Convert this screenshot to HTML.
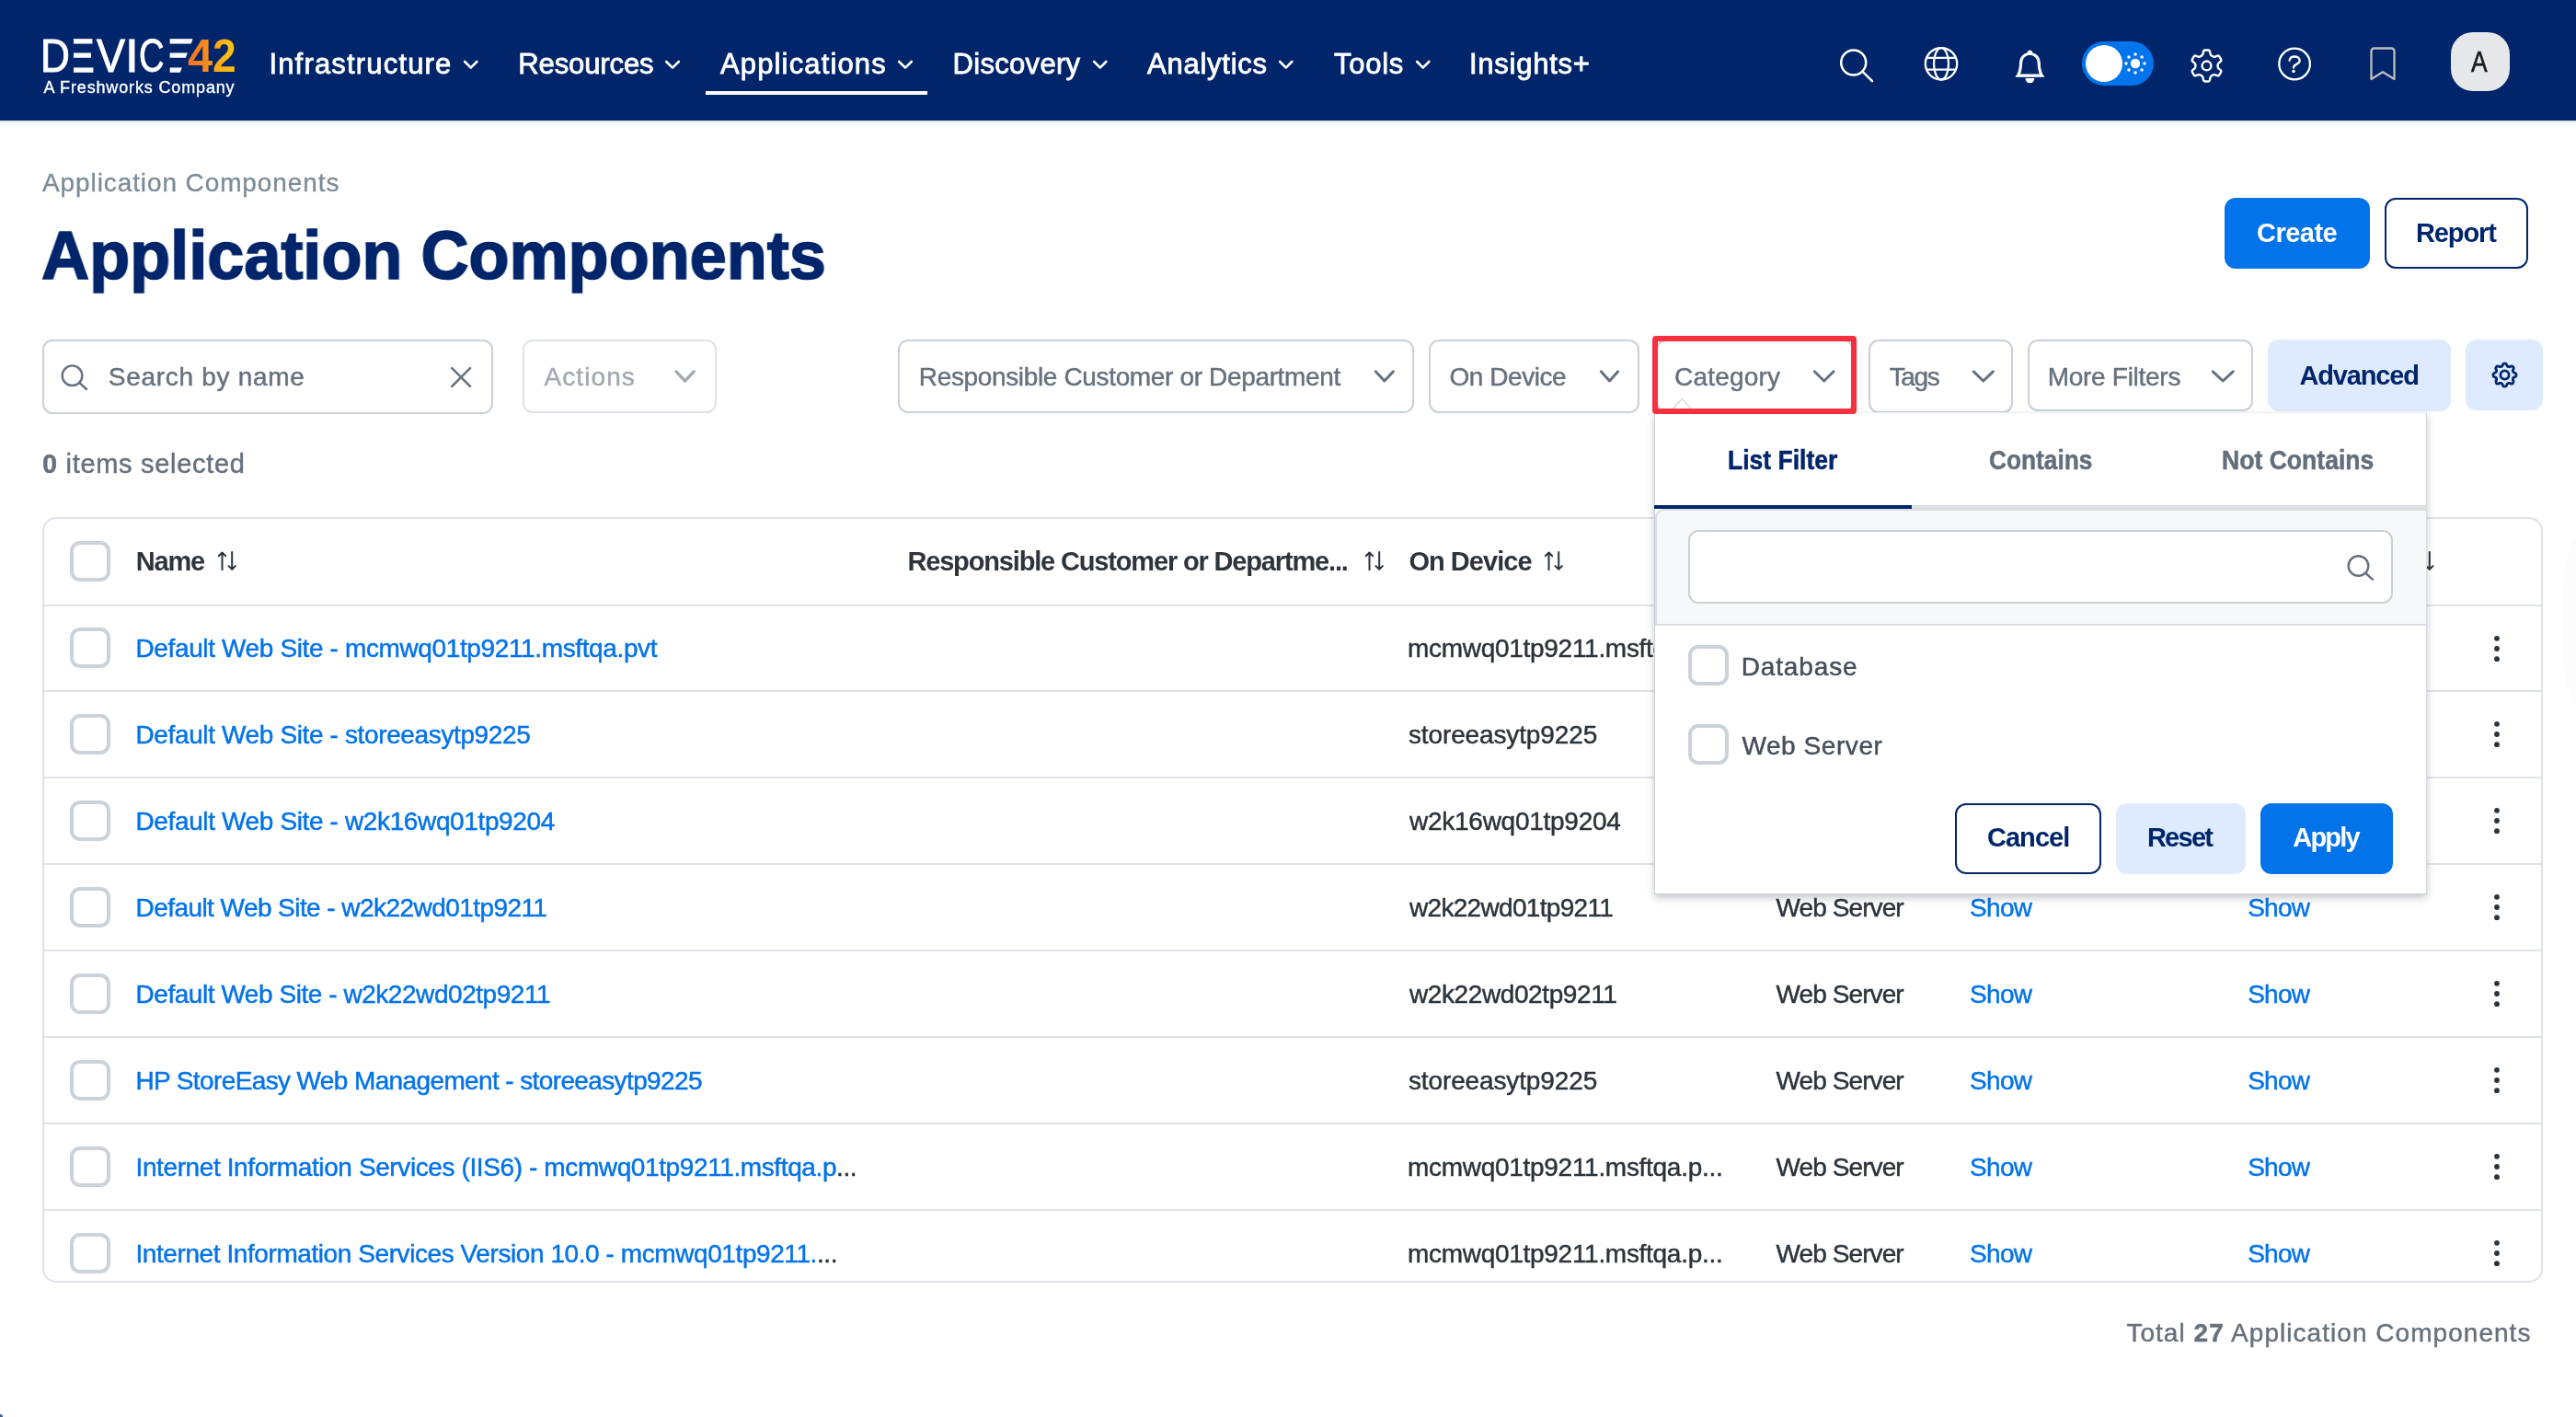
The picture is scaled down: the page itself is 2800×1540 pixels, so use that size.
<!DOCTYPE html>
<html lang="en">
<head>
<meta charset="utf-8">
<meta name="viewport" content="width=2800">
<title>Application Components</title>
<style>
*{box-sizing:border-box}
html,body{margin:0;padding:0}
body{width:2800px;height:1540px;position:relative;overflow:hidden;background:#fff;font-family:"Liberation Sans",sans-serif}
.abs,.t,svg.i{position:absolute}
.t{white-space:pre;display:block}
.t b{font-weight:700}
.nav{left:0;top:0;width:2800px;height:133px;background:#00256a;border-bottom:2px solid #e4e7ec}
.box{border:2px solid #c9d0d8;border-radius:11px;background:#fff}
.cb{width:44px;height:44px;border:4px solid #ccd2da;border-radius:11px;background:#fff}
.btn{border-radius:12px}
.line{left:0;width:100%;height:2px;background:#dfe3e8}
svg.i{overflow:visible}
.logo span{position:absolute;display:block;font-size:49.4px;line-height:120px;color:#fff;transform-origin:0 50%;-webkit-text-stroke:1px #fff;white-space:pre}
.logo i{position:absolute;display:block;background:#00256a}
.g{position:absolute;left:0;top:0;width:0;height:0;display:block;margin:0;will-change:transform}
.g-dropdown{z-index:5}
.g-overlay{z-index:6}
a.t{text-decoration:none}
h1.t{margin:0}
</style>
</head>
<body>
<nav class="g g-nav">
<div class="abs nav"></div>
<div class="abs logo" role="img" aria-label="DEVICE42" style="left:0;top:0"><span style="left:43.66px;top:0.78px;transform:scaleX(0.895);">D</span><span style="left:70.29px;top:0.78px;transform:scaleX(0.996);clip-path:inset(0 0 0 10px);-webkit-text-stroke-width:1.3px;">E</span><span style="left:104.74px;top:0.78px;transform:scaleX(0.941);">V</span><span style="left:136.23px;top:0.78px;transform:scaleX(1.073);">I</span><span style="left:151.00px;top:0.78px;transform:scaleX(0.771);">C</span><span style="left:172.30px;top:0.78px;transform:scaleX(1.237);clip-path:polygon(10px 0,43.2px 0,10px 108px);-webkit-text-stroke-width:1.3px;">E</span><span style="left:204.31px;top:0.78px;transform:scaleX(0.997);font-weight:700;color:#f58220;background:linear-gradient(90deg,#f2701f,#f7951d);-webkit-background-clip:text;background-clip:text;-webkit-text-fill-color:transparent;-webkit-text-stroke:0;">4</span><span style="left:231.22px;top:0.78px;transform:scaleX(0.934);font-weight:700;color:#fbb216;background:linear-gradient(90deg,#f9a21a,#fdc60e);-webkit-background-clip:text;background-clip:text;-webkit-text-fill-color:transparent;-webkit-text-stroke:0;">2</span></div>
<svg class="i" style="left:0;top:0" width="2800" height="130"><polyline points="505.2,67 511.75,73.6 518.3,67" fill="none" stroke="#fff" stroke-width="2.6" stroke-linecap="round" stroke-linejoin="round"/></svg>
<svg class="i" style="left:0;top:0" width="2800" height="130"><polyline points="724.2,67 731.0,73.6 737.8,67" fill="none" stroke="#fff" stroke-width="2.6" stroke-linecap="round" stroke-linejoin="round"/></svg>
<svg class="i" style="left:0;top:0" width="2800" height="130"><polyline points="977.2,67 984.0,73.6 990.8,67" fill="none" stroke="#fff" stroke-width="2.6" stroke-linecap="round" stroke-linejoin="round"/></svg>
<svg class="i" style="left:0;top:0" width="2800" height="130"><polyline points="1189.2,67 1195.75,73.6 1202.3,67" fill="none" stroke="#fff" stroke-width="2.6" stroke-linecap="round" stroke-linejoin="round"/></svg>
<svg class="i" style="left:0;top:0" width="2800" height="130"><polyline points="1391.2,67 1397.75,73.6 1404.3,67" fill="none" stroke="#fff" stroke-width="2.6" stroke-linecap="round" stroke-linejoin="round"/></svg>
<svg class="i" style="left:0;top:0" width="2800" height="130"><polyline points="1540.2,67 1546.75,73.6 1553.3,67" fill="none" stroke="#fff" stroke-width="2.6" stroke-linecap="round" stroke-linejoin="round"/></svg>
<div class="abs" style="left:767px;top:99px;width:241px;height:4px;background:#fff"></div>
<svg class="i" style="left:1996px;top:49px" width="44" height="44" viewBox="0 0 44 44" fill="none" stroke="#fff" stroke-width="2.5" stroke-linecap="round"><circle cx="18.7" cy="19" r="13.5"/><path d="M28.6 28.9L39 39.2"/></svg>
<svg class="i" style="left:2088px;top:47px" width="44" height="44" viewBox="0 0 44 44" fill="none" stroke="#fff" stroke-width="2.3"><circle cx="22" cy="22.3" r="17.2"/><ellipse cx="22" cy="22.3" rx="8" ry="17.2"/><path d="M6.2 15.9H37.8M6.2 28.7H37.8"/></svg>
<svg class="i" style="left:2189.2px;top:54.6px" width="34.8" height="34.8" viewBox="0 0 16 16" fill="#fff" stroke="#fff" stroke-width=".48" stroke-linejoin="round"><path d="M8 16a2 2 0 0 0 2-2H6a2 2 0 0 0 2 2zM8 1.918l-.797.161A4.002 4.002 0 0 0 4 6c0 .628-.134 2.197-.459 3.742-.16.767-.376 1.566-.663 2.258h10.244c-.287-.692-.502-1.49-.663-2.258C12.134 8.197 12 6.628 12 6a4.002 4.002 0 0 0-3.203-3.92L8 1.917zM14.22 12c.223.447.481.801.78 1H1c.299-.199.557-.553.78-1C2.68 10.200 3 6.880 3 6c0-2.420 1.720-4.440 4.005-4.901a1 1 0 1 1 1.990 0A5.002 5.002 0 0 1 13 6c0 .880.320 4.200 1.220 6z"/></svg>
<div class="abs" style="left:2263px;top:45px;width:78px;height:48px;border-radius:24px;background:#0375ec"></div>
<div class="abs" style="left:2267px;top:49px;width:40px;height:40px;border-radius:20px;background:#fff"></div>
<svg class="i" style="left:2301.3px;top:49.3px" width="40" height="40" viewBox="0 0 40 40" fill="#fff"><circle cx="20" cy="20" r="5.2"/><circle cx="30.00" cy="20.00" r="1.75"/><circle cx="27.07" cy="27.07" r="1.75"/><circle cx="20.00" cy="30.00" r="1.75"/><circle cx="12.93" cy="27.07" r="1.75"/><circle cx="10.00" cy="20.00" r="1.75"/><circle cx="12.93" cy="12.93" r="1.75"/><circle cx="20.00" cy="10.00" r="1.75"/><circle cx="27.07" cy="12.93" r="1.75"/></svg>
<svg class="i" style="left:2376px;top:49px" width="44" height="44" viewBox="0 0 44 44" fill="none" stroke="#fff" stroke-width="2.4" stroke-linejoin="round"><path d="M17.03 11.63Q18.33 10.88 18.59 9.40L19.01 6.94Q19.26 5.46 20.76 5.46L24.24 5.46Q25.74 5.46 25.99 6.94L26.41 9.40Q26.67 10.88 27.97 11.63L29.14 12.31Q30.44 13.06 31.85 12.53L34.19 11.67Q35.60 11.15 36.35 12.44L38.09 15.46Q38.84 16.76 37.68 17.72L35.76 19.31Q34.61 20.27 34.61 21.77L34.61 23.13Q34.61 24.63 35.76 25.59L37.68 27.18Q38.84 28.14 38.09 29.44L36.35 32.46Q35.60 33.75 34.19 33.23L31.85 32.37Q30.44 31.84 29.14 32.59L27.97 33.27Q26.67 34.02 26.41 35.50L25.99 37.96Q25.74 39.44 24.24 39.44L20.76 39.44Q19.26 39.44 19.01 37.96L18.59 35.50Q18.33 34.02 17.03 33.27L15.86 32.59Q14.56 31.84 13.15 32.37L10.81 33.23Q9.40 33.75 8.65 32.46L6.91 29.44Q6.16 28.14 7.32 27.18L9.24 25.59Q10.39 24.63 10.39 23.13L10.39 21.77Q10.39 20.27 9.24 19.31L7.32 17.72Q6.16 16.76 6.91 15.46L8.65 12.44Q9.40 11.15 10.81 11.67L13.15 12.53Q14.56 13.06 15.86 12.31Z"/><circle cx="22.5" cy="22.45" r="4.9"/></svg>
<svg class="i" style="left:2472px;top:47px" width="44" height="44" viewBox="0 0 44 44" fill="none" stroke="#fff" stroke-width="2.3" stroke-linecap="round"><circle cx="22.1" cy="22.5" r="16.8"/><path d="M16.600 18.700c.300-2.600 2.500-4.200 5.500-4.200 3.200 0 5.600 1.700 5.600 4.300 0 2.200-1.600 3.200-3.400 4.100-2 1-3.300 1.800-3.300 3.500v.3"/><circle cx="21" cy="30.500" r="1.800" fill="#fff" stroke="none"/></svg>
<svg class="i" style="left:2572px;top:47px" width="36" height="44" viewBox="0 0 36 44" fill="none" stroke="#bdbdbd" stroke-width="2.3" stroke-linejoin="round"><path d="M5.500 39V8.500a3 3 0 0 1 3-3h19a3 3 0 0 1 3 3V39L18 31.200z"/></svg>
<div class="abs" style="left:2664px;top:35px;width:64px;height:64px;border-radius:24px;background:#e5e7eb"></div>
<span class="t t-nav" style="left:292.4px;top:47.5px;font-size:31px;line-height:43px;color:#fff;letter-spacing:1.18px;-webkit-text-stroke:.8px #fff;">Infrastructure</span>
<span class="t t-nav" style="left:563.3px;top:47.5px;font-size:31px;line-height:43px;color:#fff;letter-spacing:-0.12px;-webkit-text-stroke:.8px #fff;">Resources</span>
<span class="t t-nav" style="left:783.0px;top:47.5px;font-size:31px;line-height:43px;color:#fff;letter-spacing:1.14px;-webkit-text-stroke:.8px #fff;">Applications</span>
<span class="t t-nav" style="left:1035.5px;top:47.5px;font-size:31px;line-height:43px;color:#fff;letter-spacing:0.31px;-webkit-text-stroke:.8px #fff;">Discovery</span>
<span class="t t-nav" style="left:1247.0px;top:47.5px;font-size:31px;line-height:43px;color:#fff;letter-spacing:0.75px;-webkit-text-stroke:.8px #fff;">Analytics</span>
<span class="t t-nav" style="left:1450.0px;top:47.5px;font-size:31px;line-height:43px;color:#fff;letter-spacing:0.75px;-webkit-text-stroke:.8px #fff;">Tools</span>
<span class="t t-nav" style="left:1597.0px;top:47.5px;font-size:31px;line-height:43px;color:#fff;letter-spacing:0.75px;-webkit-text-stroke:.8px #fff;">Insights+</span>
<span class="t t-tag" style="left:47.4px;top:83.3px;font-size:18px;line-height:25px;color:#fff;letter-spacing:0.85px;-webkit-text-stroke:.35px #fff;">A Freshworks Company</span>
<span class="t t-av" style="left:2686.3px;top:45.1px;font-size:32px;line-height:45px;color:#1a1a1a;-webkit-text-stroke:.6px;transform:scaleX(0.8273);transform-origin:0 50%;">A</span>
</nav>
<header class="g g-header">
<div class="abs btn" style="left:2418px;top:215px;width:158px;height:77px;background:#0373ea"></div>
<div class="abs btn" style="left:2592px;top:215px;width:156px;height:77px;border:2px solid #00256a;background:#fff"></div>
<span class="t t-crumb" style="left:46.0px;top:179.1px;font-size:28px;line-height:39px;color:#7a8b98;letter-spacing:0.90px;-webkit-text-stroke:.3px;">Application Components</span>
<h1 class="t t-h1" style="left:44.9px;top:225.1px;font-size:75px;line-height:105px;color:#00256a;font-weight:700;-webkit-text-stroke:1.7px;transform:scaleX(0.9610);transform-origin:0 50%;">Application Components</h1>
<span class="t t-btn" style="left:2453.0px;top:232.5px;font-size:29px;line-height:41px;color:#fff;letter-spacing:-0.52px;font-weight:700;">Create</span>
<span class="t t-btn" style="left:2626.0px;top:232.5px;font-size:29px;line-height:41px;color:#00256a;letter-spacing:-1.12px;font-weight:700;">Report</span>
</header>
<section class="g g-filters">
<div class="abs box" style="left:46px;top:369px;width:490px;height:81px"></div>
<svg class="i" style="left:62.3px;top:391.6px" width="36" height="36" viewBox="0 0 36 36" fill="none" stroke="#66717d" stroke-width="2.4" stroke-linecap="round"><circle cx="16.5" cy="16.200" r="10.800"/><path d="M24.500 24.200L32 31"/></svg>
<svg class="i" style="left:486px;top:395px" width="30" height="30" viewBox="0 0 30 30" fill="none" stroke="#66717d" stroke-width="2.6" stroke-linecap="round"><path d="M5.300 5.200L25 24.900M25 5.200L5.300 24.900"/></svg>
<div class="abs box" style="left:567.6px;top:369px;width:211px;height:79.5px;border-color:#dde2e7"></div>
<svg class="i" style="left:0;top:0" width="2800" height="460"><polyline points="735.0,403.8 744.6,414 754.2,403.8" fill="none" stroke="#a2a9b1" stroke-width="3.3" stroke-linecap="round" stroke-linejoin="round"/></svg>
<div class="abs box" style="left:976px;top:369px;width:561px;height:79.5px"></div>
<svg class="i" style="left:0;top:0" width="2800" height="460"><polyline points="1495.3,403.8 1504.85,414 1514.4,403.8" fill="none" stroke="#66717d" stroke-width="3" stroke-linecap="round" stroke-linejoin="round"/></svg>
<div class="abs box" style="left:1553.4px;top:369px;width:228.300px;height:79.5px"></div>
<svg class="i" style="left:0;top:0" width="2800" height="460"><polyline points="1740.3,403.8 1749.5,414 1758.7,403.8" fill="none" stroke="#66717d" stroke-width="3" stroke-linecap="round" stroke-linejoin="round"/></svg>
<div class="abs box" style="left:1799.5px;top:368.5px;width:215.5px;height:79.5px"></div>
<svg class="i" style="left:0;top:0" width="2800" height="460"><polyline points="1972.3,403.8 1982.7,414 1993.1000000000001,403.8" fill="none" stroke="#66717d" stroke-width="3" stroke-linecap="round" stroke-linejoin="round"/></svg>
<svg class="i" style="left:1809.6px;top:429.3px" width="40" height="22"><path d="M5 19L18.300 4.300 31.600 19" fill="#fff" stroke="#d6dbe1" stroke-width="1.5"/></svg>
<div class="abs box" style="left:2031px;top:369px;width:156.700px;height:79.5px"></div>
<svg class="i" style="left:0;top:0" width="2800" height="460"><polyline points="2145.3,403.8 2155.8,414 2166.2999999999997,403.8" fill="none" stroke="#66717d" stroke-width="3" stroke-linecap="round" stroke-linejoin="round"/></svg>
<div class="abs box" style="left:2204px;top:369px;width:244.700px;height:78px"></div>
<svg class="i" style="left:0;top:0" width="2800" height="460"><polyline points="2405.3,403.8 2416.25,414 2427.2,403.8" fill="none" stroke="#66717d" stroke-width="3" stroke-linecap="round" stroke-linejoin="round"/></svg>
<div class="abs btn" style="left:2465px;top:369px;width:199px;height:78px;background:#deeafd"></div>
<div class="abs btn" style="left:2680px;top:369px;width:84px;height:77px;background:#deeafd"></div>
<svg class="i" style="left:2708.5px;top:394.3px" width="27" height="27" viewBox="0 0 16 16" fill="#00256a" stroke="#00256a" stroke-width=".66" stroke-linejoin="round"><path d="M8 4.754a3.246 3.246 0 1 0 0 6.492 3.246 3.246 0 0 0 0-6.492zM5.754 8a2.246 2.246 0 1 1 4.492 0 2.246 2.246 0 0 1-4.492 0z"/><path d="M9.796 1.343c-.527-1.790-3.065-1.790-3.592 0l-.094.319a.873.873 0 0 1-1.255.520l-.292-.160c-1.640-.892-3.433.902-2.540 2.541l.159.292a.873.873 0 0 1-.520 1.255l-.319.094c-1.790.527-1.790 3.065 0 3.592l.319.094a.873.873 0 0 1 .520 1.255l-.160.292c-.892 1.640.901 3.434 2.541 2.540l.292-.159a.873.873 0 0 1 1.255.520l.094.319c.527 1.790 3.065 1.790 3.592 0l.094-.319a.873.873 0 0 1 1.255-.520l.292.160c1.640.893 3.434-.902 2.540-2.541l-.159-.292a.873.873 0 0 1 .520-1.255l.319-.094c1.790-.527 1.790-3.065 0-3.592l-.319-.094a.873.873 0 0 1-.520-1.255l.160-.292c.893-1.640-.902-3.433-2.541-2.540l-.292.159a.873.873 0 0 1-1.255-.520l-.094-.319zm-2.633.283c.246-.835 1.428-.835 1.674 0l.094.319a1.873 1.873 0 0 0 2.693 1.115l.291-.160c.764-.415 1.600.420 1.184 1.185l-.159.292a1.873 1.873 0 0 0 1.116 2.692l.318.094c.835.246.835 1.428 0 1.674l-.319.094a1.873 1.873 0 0 0-1.115 2.693l.160.291c.415.764-.420 1.600-1.185 1.184l-.291-.159a1.873 1.873 0 0 0-2.693 1.116l-.094.318c-.246.835-1.428.835-1.674 0l-.094-.319a1.873 1.873 0 0 0-2.692-1.115l-.292.160c-.764.415-1.600-.420-1.184-1.185l.159-.291A1.873 1.873 0 0 0 1.945 8.930l-.319-.094c-.835-.246-.835-1.428 0-1.674l.319-.094A1.873 1.873 0 0 0 3.060 4.377l-.160-.292c-.415-.764.420-1.600 1.185-1.184l.292.159a1.873 1.873 0 0 0 2.692-1.115l.094-.319z"/></svg>
<span class="t" style="left:117.8px;top:390.4px;font-size:28px;line-height:39px;color:#66717d;letter-spacing:0.71px;-webkit-text-stroke:.45px;">Search by name</span>
<span class="t" style="left:591.5px;top:390.4px;font-size:28px;line-height:39px;color:#a2a9b1;letter-spacing:1.08px;-webkit-text-stroke:.45px;">Actions</span>
<span class="t" style="left:998.8px;top:389.7px;font-size:28px;line-height:39px;color:#66717d;letter-spacing:-0.35px;-webkit-text-stroke:.45px;">Responsible Customer or Department</span>
<span class="t" style="left:1575.5px;top:389.7px;font-size:28px;line-height:39px;color:#66717d;letter-spacing:-0.44px;-webkit-text-stroke:.45px;">On Device</span>
<span class="t" style="left:1820.0px;top:389.7px;font-size:28px;line-height:39px;color:#66717d;letter-spacing:0.21px;-webkit-text-stroke:.45px;">Category</span>
<span class="t" style="left:2053.7px;top:389.7px;font-size:28px;line-height:39px;color:#66717d;letter-spacing:-1.33px;-webkit-text-stroke:.45px;">Tags</span>
<span class="t" style="left:2225.7px;top:389.7px;font-size:28px;line-height:39px;color:#66717d;letter-spacing:-0.28px;-webkit-text-stroke:.45px;">More Filters</span>
<span class="t" style="left:2499.4px;top:387.8px;font-size:29px;line-height:41px;color:#00256a;letter-spacing:-1.14px;font-weight:700;">Advanced</span>
<span class="t t-sel" style="left:46.0px;top:483.8px;font-size:29px;line-height:41px;color:#66717d;letter-spacing:0.69px;-webkit-text-stroke:.45px;"><b>0</b> items selected</span>
</section>
<section class="g g-table">
<div class="abs" style="left:46px;top:562px;width:2718.3px;height:832px;border:2px solid #dfe3e8;border-radius:15px;overflow:hidden;background:#fff">
<div class="abs line" style="top:93.0px"></div>
<div class="abs line" style="top:186.0px"></div>
<div class="abs line" style="top:280.0px"></div>
<div class="abs line" style="top:374.0px"></div>
<div class="abs line" style="top:468.0px"></div>
<div class="abs line" style="top:562.0px"></div>
<div class="abs line" style="top:656.0px"></div>
<div class="abs line" style="top:750.0px"></div>
</div>
<div class="abs cb" style="left:76px;top:588px"></div>
<div class="abs cb" style="left:76px;top:682.2px"></div>
<div class="abs cb" style="left:76px;top:776.0px"></div>
<div class="abs cb" style="left:76px;top:870.0px"></div>
<div class="abs cb" style="left:76px;top:964.0px"></div>
<div class="abs cb" style="left:76px;top:1058.0px"></div>
<div class="abs cb" style="left:76px;top:1152.0px"></div>
<div class="abs cb" style="left:76px;top:1246.0px"></div>
<div class="abs cb" style="left:76px;top:1340.0px"></div>
<svg class="i" style="left:237px;top:599.3px" width="20" height="22" viewBox="0 0 20 22" fill="none" stroke="#2b333b" stroke-width="2" stroke-linecap="round" stroke-linejoin="round"><path d="M4.500 20.300V1.500M0.800 5.200L4.500 1.500l3.700 3.700M15.200 1V19.800M11.500 16.100l3.700 3.700 3.700-3.700"/></svg>
<svg class="i" style="left:1484px;top:599.3px" width="20" height="22" viewBox="0 0 20 22" fill="none" stroke="#2b333b" stroke-width="2" stroke-linecap="round" stroke-linejoin="round"><path d="M4.500 20.300V1.500M0.800 5.200L4.500 1.500l3.700 3.700M15.200 1V19.800M11.500 16.100l3.700 3.700 3.700-3.700"/></svg>
<svg class="i" style="left:1679px;top:599.3px" width="20" height="22" viewBox="0 0 20 22" fill="none" stroke="#2b333b" stroke-width="2" stroke-linecap="round" stroke-linejoin="round"><path d="M4.500 20.300V1.500M0.800 5.200L4.500 1.500l3.700 3.700M15.200 1V19.800M11.500 16.100l3.700 3.700 3.700-3.700"/></svg>
<svg class="i" style="left:2633.7px;top:599.3px" width="20" height="22" viewBox="0 0 20 22" fill="none" stroke="#2b333b" stroke-width="2" stroke-linecap="round" stroke-linejoin="round"><path d="M6.800 1V19.800M3.100 16.100l3.700 3.700 3.700-3.700"/></svg>
<svg class="i" style="left:2703.700px;top:684.6px" width="20" height="40" fill="#2b333b"><circle cx="10" cy="8.800" r="2.900"/><circle cx="10" cy="20" r="2.900"/><circle cx="10" cy="31.200" r="2.900"/></svg>
<svg class="i" style="left:2703.700px;top:778.4px" width="20" height="40" fill="#2b333b"><circle cx="10" cy="8.800" r="2.900"/><circle cx="10" cy="20" r="2.900"/><circle cx="10" cy="31.200" r="2.900"/></svg>
<svg class="i" style="left:2703.700px;top:872.4px" width="20" height="40" fill="#2b333b"><circle cx="10" cy="8.800" r="2.900"/><circle cx="10" cy="20" r="2.900"/><circle cx="10" cy="31.200" r="2.900"/></svg>
<svg class="i" style="left:2703.700px;top:966.4px" width="20" height="40" fill="#2b333b"><circle cx="10" cy="8.800" r="2.900"/><circle cx="10" cy="20" r="2.900"/><circle cx="10" cy="31.200" r="2.900"/></svg>
<svg class="i" style="left:2703.700px;top:1060.4px" width="20" height="40" fill="#2b333b"><circle cx="10" cy="8.800" r="2.900"/><circle cx="10" cy="20" r="2.900"/><circle cx="10" cy="31.200" r="2.900"/></svg>
<svg class="i" style="left:2703.700px;top:1154.4px" width="20" height="40" fill="#2b333b"><circle cx="10" cy="8.800" r="2.900"/><circle cx="10" cy="20" r="2.900"/><circle cx="10" cy="31.200" r="2.900"/></svg>
<svg class="i" style="left:2703.700px;top:1248.4px" width="20" height="40" fill="#2b333b"><circle cx="10" cy="8.800" r="2.900"/><circle cx="10" cy="20" r="2.900"/><circle cx="10" cy="31.200" r="2.900"/></svg>
<svg class="i" style="left:2703.700px;top:1342.4px" width="20" height="40" fill="#2b333b"><circle cx="10" cy="8.800" r="2.900"/><circle cx="10" cy="20" r="2.900"/><circle cx="10" cy="31.200" r="2.900"/></svg>
<span class="t t-th" style="left:147.8px;top:590.2px;font-size:29px;line-height:41px;color:#2e343c;letter-spacing:-1.20px;font-weight:700;">Name</span>
<span class="t t-th" style="left:986.4px;top:590.2px;font-size:29px;line-height:41px;color:#2e343c;letter-spacing:-1.16px;font-weight:700;">Responsible Customer or Departme...</span>
<span class="t t-th" style="left:1531.4px;top:590.2px;font-size:29px;line-height:41px;color:#2e343c;letter-spacing:-0.96px;font-weight:700;">On Device</span>
<a class="t t-lnk" style="left:147.5px;top:684.9px;font-size:28px;line-height:39px;color:#0373ea;letter-spacing:-0.37px;-webkit-text-stroke:.45px;">Default Web Site - mcmwq01tp9211.msftqa.pvt</a>
<span class="t t-td" style="left:1530.0px;top:684.9px;font-size:28px;line-height:39px;color:#2b333b;letter-spacing:-0.29px;-webkit-text-stroke:.45px;">mcmwq01tp9211.msftqa.p...</span>
<span class="t t-td" style="left:1930.5px;top:684.9px;font-size:28px;line-height:39px;color:#2b333b;letter-spacing:-0.91px;-webkit-text-stroke:.45px;">Web Server</span>
<a class="t t-lnk" style="left:2141.0px;top:684.9px;font-size:28px;line-height:39px;color:#0373ea;letter-spacing:-0.67px;-webkit-text-stroke:.45px;">Show</a>
<a class="t t-lnk" style="left:2443.2px;top:684.9px;font-size:28px;line-height:39px;color:#0373ea;letter-spacing:-0.77px;-webkit-text-stroke:.45px;">Show</a>
<a class="t t-lnk" style="left:147.5px;top:778.8px;font-size:28px;line-height:39px;color:#0373ea;letter-spacing:-0.37px;-webkit-text-stroke:.45px;">Default Web Site - storeeasytp9225</a>
<span class="t t-td" style="left:1531.0px;top:778.8px;font-size:28px;line-height:39px;color:#2b333b;letter-spacing:-0.13px;-webkit-text-stroke:.45px;">storeeasytp9225</span>
<span class="t t-td" style="left:1930.5px;top:778.8px;font-size:28px;line-height:39px;color:#2b333b;letter-spacing:-0.91px;-webkit-text-stroke:.45px;">Web Server</span>
<a class="t t-lnk" style="left:2141.0px;top:778.8px;font-size:28px;line-height:39px;color:#0373ea;letter-spacing:-0.67px;-webkit-text-stroke:.45px;">Show</a>
<a class="t t-lnk" style="left:2443.2px;top:778.8px;font-size:28px;line-height:39px;color:#0373ea;letter-spacing:-0.77px;-webkit-text-stroke:.45px;">Show</a>
<a class="t t-lnk" style="left:147.5px;top:872.8px;font-size:28px;line-height:39px;color:#0373ea;letter-spacing:-0.37px;-webkit-text-stroke:.45px;">Default Web Site - w2k16wq01tp9204</a>
<span class="t t-td" style="left:1532.0px;top:872.8px;font-size:28px;line-height:39px;color:#2b333b;letter-spacing:-0.26px;-webkit-text-stroke:.45px;">w2k16wq01tp9204</span>
<span class="t t-td" style="left:1930.5px;top:872.8px;font-size:28px;line-height:39px;color:#2b333b;letter-spacing:-0.91px;-webkit-text-stroke:.45px;">Web Server</span>
<a class="t t-lnk" style="left:2141.0px;top:872.8px;font-size:28px;line-height:39px;color:#0373ea;letter-spacing:-0.67px;-webkit-text-stroke:.45px;">Show</a>
<a class="t t-lnk" style="left:2443.2px;top:872.8px;font-size:28px;line-height:39px;color:#0373ea;letter-spacing:-0.77px;-webkit-text-stroke:.45px;">Show</a>
<a class="t t-lnk" style="left:147.5px;top:966.8px;font-size:28px;line-height:39px;color:#0373ea;letter-spacing:-0.56px;-webkit-text-stroke:.45px;">Default Web Site - w2k22wd01tp9211</a>
<span class="t t-td" style="left:1532.0px;top:966.8px;font-size:28px;line-height:39px;color:#2b333b;letter-spacing:-0.69px;-webkit-text-stroke:.45px;">w2k22wd01tp9211</span>
<span class="t t-td" style="left:1930.5px;top:966.8px;font-size:28px;line-height:39px;color:#2b333b;letter-spacing:-0.91px;-webkit-text-stroke:.45px;">Web Server</span>
<a class="t t-lnk" style="left:2141.0px;top:966.8px;font-size:28px;line-height:39px;color:#0373ea;letter-spacing:-0.67px;-webkit-text-stroke:.45px;">Show</a>
<a class="t t-lnk" style="left:2443.2px;top:966.8px;font-size:28px;line-height:39px;color:#0373ea;letter-spacing:-0.77px;-webkit-text-stroke:.45px;">Show</a>
<a class="t t-lnk" style="left:147.5px;top:1060.8px;font-size:28px;line-height:39px;color:#0373ea;letter-spacing:-0.45px;-webkit-text-stroke:.45px;">Default Web Site - w2k22wd02tp9211</a>
<span class="t t-td" style="left:1532.0px;top:1060.8px;font-size:28px;line-height:39px;color:#2b333b;letter-spacing:-0.40px;-webkit-text-stroke:.45px;">w2k22wd02tp9211</span>
<span class="t t-td" style="left:1930.5px;top:1060.8px;font-size:28px;line-height:39px;color:#2b333b;letter-spacing:-0.91px;-webkit-text-stroke:.45px;">Web Server</span>
<a class="t t-lnk" style="left:2141.0px;top:1060.8px;font-size:28px;line-height:39px;color:#0373ea;letter-spacing:-0.67px;-webkit-text-stroke:.45px;">Show</a>
<a class="t t-lnk" style="left:2443.2px;top:1060.8px;font-size:28px;line-height:39px;color:#0373ea;letter-spacing:-0.77px;-webkit-text-stroke:.45px;">Show</a>
<a class="t t-lnk" style="left:147.5px;top:1154.8px;font-size:28px;line-height:39px;color:#0373ea;letter-spacing:-0.62px;-webkit-text-stroke:.45px;">HP StoreEasy Web Management - storeeasytp9225</a>
<span class="t t-td" style="left:1531.0px;top:1154.8px;font-size:28px;line-height:39px;color:#2b333b;letter-spacing:-0.13px;-webkit-text-stroke:.45px;">storeeasytp9225</span>
<span class="t t-td" style="left:1930.5px;top:1154.8px;font-size:28px;line-height:39px;color:#2b333b;letter-spacing:-0.91px;-webkit-text-stroke:.45px;">Web Server</span>
<a class="t t-lnk" style="left:2141.0px;top:1154.8px;font-size:28px;line-height:39px;color:#0373ea;letter-spacing:-0.67px;-webkit-text-stroke:.45px;">Show</a>
<a class="t t-lnk" style="left:2443.2px;top:1154.8px;font-size:28px;line-height:39px;color:#0373ea;letter-spacing:-0.77px;-webkit-text-stroke:.45px;">Show</a>
<a class="t t-lnk" style="left:147.5px;top:1248.8px;font-size:28px;line-height:39px;color:#0373ea;letter-spacing:-0.39px;-webkit-text-stroke:.45px;">Internet Information Services (IIS6) - mcmwq01tp9211.msftqa.p<span style="color:#2b333b">...</span></a>
<span class="t t-td" style="left:1530.0px;top:1248.8px;font-size:28px;line-height:39px;color:#2b333b;letter-spacing:-0.29px;-webkit-text-stroke:.45px;">mcmwq01tp9211.msftqa.p...</span>
<span class="t t-td" style="left:1930.5px;top:1248.8px;font-size:28px;line-height:39px;color:#2b333b;letter-spacing:-0.91px;-webkit-text-stroke:.45px;">Web Server</span>
<a class="t t-lnk" style="left:2141.0px;top:1248.8px;font-size:28px;line-height:39px;color:#0373ea;letter-spacing:-0.67px;-webkit-text-stroke:.45px;">Show</a>
<a class="t t-lnk" style="left:2443.2px;top:1248.8px;font-size:28px;line-height:39px;color:#0373ea;letter-spacing:-0.77px;-webkit-text-stroke:.45px;">Show</a>
<a class="t t-lnk" style="left:147.5px;top:1342.8px;font-size:28px;line-height:39px;color:#0373ea;letter-spacing:-0.42px;-webkit-text-stroke:.45px;">Internet Information Services Version 10.0 - mcmwq01tp9211.<span style="color:#2b333b">...</span></a>
<span class="t t-td" style="left:1530.0px;top:1342.8px;font-size:28px;line-height:39px;color:#2b333b;letter-spacing:-0.29px;-webkit-text-stroke:.45px;">mcmwq01tp9211.msftqa.p...</span>
<span class="t t-td" style="left:1930.5px;top:1342.8px;font-size:28px;line-height:39px;color:#2b333b;letter-spacing:-0.91px;-webkit-text-stroke:.45px;">Web Server</span>
<a class="t t-lnk" style="left:2141.0px;top:1342.8px;font-size:28px;line-height:39px;color:#0373ea;letter-spacing:-0.67px;-webkit-text-stroke:.45px;">Show</a>
<a class="t t-lnk" style="left:2443.2px;top:1342.8px;font-size:28px;line-height:39px;color:#0373ea;letter-spacing:-0.77px;-webkit-text-stroke:.45px;">Show</a>
<span class="t t-foot" style="left:2311.4px;top:1429.3px;font-size:28px;line-height:39px;color:#66717d;letter-spacing:1.04px;-webkit-text-stroke:.45px;">Total <b>27</b> Application Components</span>
</section>
<div class="g g-dropdown">
<div class="abs" style="left:1798px;top:448px;width:840px;height:523.5px;background:#fff;border:1.5px solid #cbd0d8;border-top-color:#eceef1;border-right-color:#dadde2;box-shadow:0 4px 8px rgba(20,30,50,.24)"></div>
<div class="abs" style="left:1798px;top:548.5px;width:840px;height:4.5px;background:#dcdfe3"></div>
<div class="abs" style="left:1798px;top:548.5px;width:280px;height:4.5px;background:#00256a"></div>
<div class="abs" style="left:1799px;top:553px;width:837.5px;height:127px;background:#f7f8fa;border:2px solid #d9dee4;border-right:0;border-radius:9px 0 0 0"></div>
<div class="abs box" style="left:1835px;top:576px;width:765.5px;height:80px"></div>
<svg class="i" style="left:2547.3px;top:598px" width="36" height="36" viewBox="0 0 36 36" fill="none" stroke="#66717d" stroke-width="2.4" stroke-linecap="round"><circle cx="16.500" cy="17" r="10.800"/><path d="M24.500 25L32 31.800"/></svg>
<div class="abs cb" style="left:1835px;top:701px"></div>
<div class="abs cb" style="left:1835px;top:787px"></div>
<div class="abs btn" style="left:2125px;top:873px;width:159px;height:77px;border:2px solid #00256a;background:#fff"></div>
<div class="abs btn" style="left:2300px;top:873px;width:141px;height:77px;background:#deeafd"></div>
<div class="abs btn" style="left:2457px;top:873px;width:144px;height:77px;background:#0373ea"></div>
<span class="t t-dd" style="left:1877.7px;top:479.8px;font-size:29px;line-height:41px;color:#00256a;font-weight:700;-webkit-text-stroke:.5px;transform:scaleX(0.9147);transform-origin:0 50%;">List Filter</span>
<span class="t t-dd" style="left:2161.6px;top:479.8px;font-size:29px;line-height:41px;color:#626e7b;font-weight:700;-webkit-text-stroke:.5px;transform:scaleX(0.9057);transform-origin:0 50%;">Contains</span>
<span class="t t-dd" style="left:2414.6px;top:479.8px;font-size:29px;line-height:41px;color:#626e7b;font-weight:700;-webkit-text-stroke:.5px;transform:scaleX(0.9163);transform-origin:0 50%;">Not Contains</span>
<span class="t t-dd" style="left:1892.7px;top:704.6px;font-size:28px;line-height:39px;color:#454e59;letter-spacing:0.87px;-webkit-text-stroke:.45px;">Database</span>
<span class="t t-dd" style="left:1893.4px;top:790.6px;font-size:28px;line-height:39px;color:#454e59;letter-spacing:0.58px;-webkit-text-stroke:.45px;">Web Server</span>
<span class="t t-dd" style="left:2159.9px;top:890.3px;font-size:29px;line-height:41px;color:#00256a;letter-spacing:-0.92px;font-weight:700;">Cancel</span>
<span class="t t-dd" style="left:2333.9px;top:890.3px;font-size:29px;line-height:41px;color:#00256a;letter-spacing:-1.73px;font-weight:700;">Reset</span>
<span class="t t-dd" style="left:2492.2px;top:890.3px;font-size:29px;line-height:41px;color:#fff;letter-spacing:-1.75px;font-weight:700;">Apply</span>
</div>
<div class="g g-overlay">
<div class="abs" style="left:2784px;top:585px;width:36px;height:180px;border-radius:50%;background:#fcfcfd"></div>
<div class="abs" style="left:1796px;top:365px;width:222px;height:84.5px;border:6px solid #f7303f;border-radius:4px"></div>
<div class="abs" style="left:0;top:1537px;width:3px;height:3px;background:#3b5b9b;border-radius:0 3px 0 0"></div>
</div>
</body>
</html>
